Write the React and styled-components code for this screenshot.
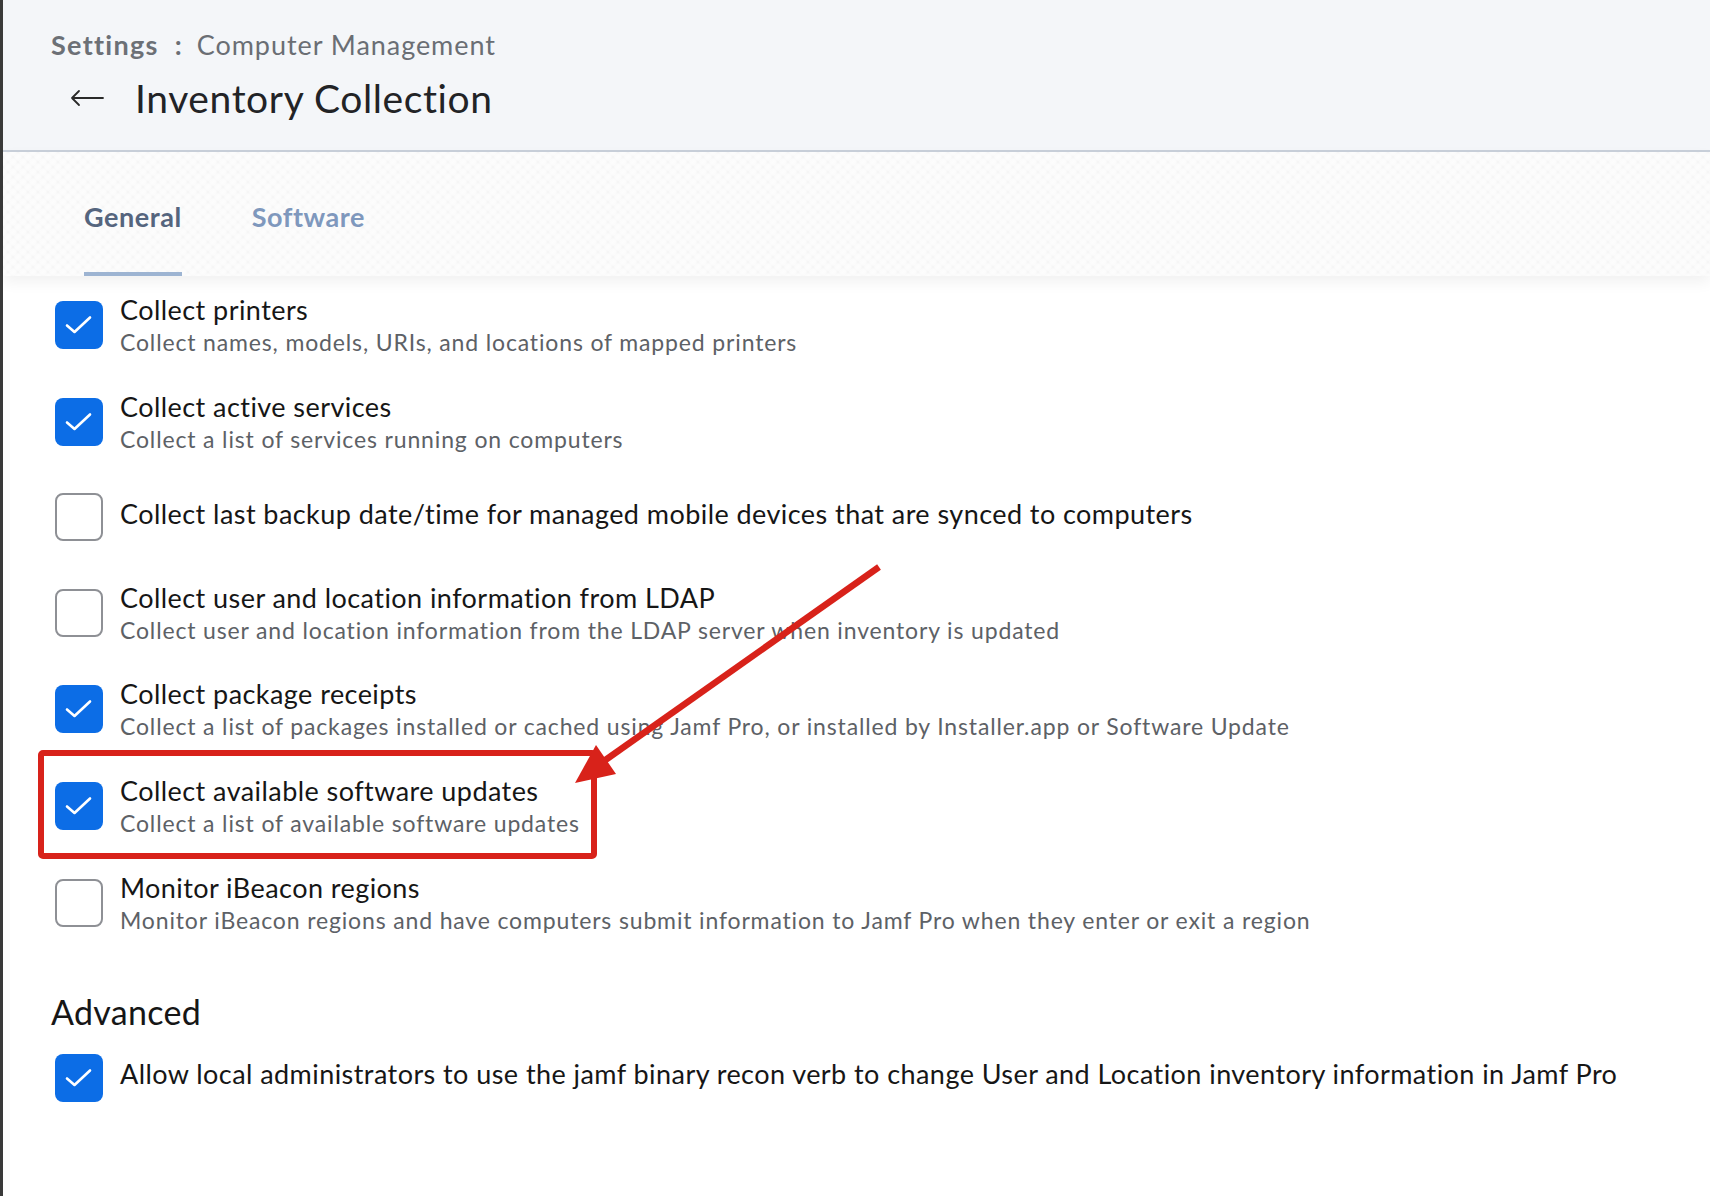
import React from "react";
import styled, { createGlobalStyle } from "styled-components";

const GlobalStyle = createGlobalStyle`
  html, body {
    margin: 0;
    padding: 0;
    background: #ffffff;
  }
  body {
    font-family: Lato, "Open Sans", "Liberation Sans", sans-serif;
    color: #161616;
  }
`;

const options = [
  {
    id: "printers",
    checked: true,
    title: "Collect printers",
    desc: "Collect names, models, URIs, and locations of mapped printers",
  },
  {
    id: "services",
    checked: true,
    title: "Collect active services",
    desc: "Collect a list of services running on computers",
  },
  {
    id: "backup",
    checked: false,
    title: "Collect last backup date/time for managed mobile devices that are synced to computers",
  },
  {
    id: "ldap",
    checked: false,
    title: "Collect user and location information from LDAP",
    desc: "Collect user and location information from the LDAP server when inventory is updated",
  },
  {
    id: "receipts",
    checked: true,
    title: "Collect package receipts",
    desc: "Collect a list of packages installed or cached using Jamf Pro, or installed by Installer.app or Software Update",
  },
  {
    id: "updates",
    checked: true,
    title: "Collect available software updates",
    desc: "Collect a list of available software updates",
  },
  {
    id: "ibeacon",
    checked: false,
    title: "Monitor iBeacon regions",
    desc: "Monitor iBeacon regions and have computers submit information to Jamf Pro when they enter or exit a region",
  },
];

/** Чекбокс в стиле Jamf */
function Checkbox({ checked }) {
  return (
    <Box $checked={checked}>
      {checked && (
        <svg width="48" height="48" viewBox="0 0 48 48">
          <path
            d="M12 24.5 L19.5 31 L35 16.5"
            fill="none"
            stroke="#ffffff"
            strokeWidth="2.6"
            strokeLinecap="round"
            strokeLinejoin="round"
          />
        </svg>
      )}
    </Box>
  );
}

function OptionRow({ option }) {
  const twoLines = Boolean(option.desc);
  return (
    <Row>
      <Checkbox checked={option.checked} />
      <RowText $twoLines={twoLines}>
        <RowTitle>{option.title}</RowTitle>
        {twoLines && <RowDesc>{option.desc}</RowDesc>}
      </RowText>
    </Row>
  );
}

export default function App() {
  return (
    <>
      <GlobalStyle />
      <Root>
        <Page>
          <Header>
            <Breadcrumb>
              <Crumb>Settings</Crumb>
              <Sep>:</Sep>
              <CrumbCurrent>Computer Management</CrumbCurrent>
            </Breadcrumb>
            <TitleRow>
              <BackArrow width="34" height="18" viewBox="0 0 34 18">
                <path
                  d="M33 9 H2 M9 2 L2 9 L9 16"
                  fill="none"
                  stroke="#2a2a2a"
                  strokeWidth="1.8"
                  strokeLinecap="round"
                  strokeLinejoin="round"
                />
              </BackArrow>
              <Title>Inventory Collection</Title>
            </TitleRow>
          </Header>

          <TabBar>
            <Tab $active>General</Tab>
            <Tab>Software</Tab>
          </TabBar>

          <Content>
            <OptionList>
              {options.map((o) => (
                <OptionRow key={o.id} option={o} />
              ))}
            </OptionList>
            <SectionHeading>Advanced</SectionHeading>
            <OptionRow
              option={{
                checked: true,
                title:
                  "Allow local administrators to use the jamf binary recon verb to change User and Location inventory information in Jamf Pro",
              }}
            />
          </Content>
        </Page>

        <Overlay width="1710" height="1196" viewBox="0 0 1710 1196">
          <rect x="41" y="753" width="553" height="103" fill="none" stroke="#d8221a" strokeWidth="6" rx="2" />
          <line x1="879" y1="567" x2="604" y2="761" stroke="#d8221a" strokeWidth="6.5" />
          <polygon points="575,783 596,745 616,774" fill="#d8221a" />
        </Overlay>
      </Root>
    </>
  );
}

const Root = styled.div`
  position: relative;
  width: 1710px;
  min-height: 1196px;
  overflow: hidden;
`;

const Page = styled.div`
  min-height: 1196px;
  border-left: 3px solid #3a3a3a;
  background: #ffffff;
`;

const Header = styled.header`
  background: #f4f6f9;
  border-bottom: 2px solid #c9d0da;
  padding: 26px 48px 26px;
`;

const Breadcrumb = styled.div`
  display: flex;
  align-items: center;
  height: 36px;
  font-size: 27px;
  color: #6a6e74;
`;

const Crumb = styled.span`
  font-weight: 700;
  color: #6c7076;
  letter-spacing: 1.3px;
`;

const Sep = styled.span`
  margin: 0 15px 0 16px;
  font-weight: 700;
`;

const CrumbCurrent = styled.span`
  letter-spacing: 0.95px;
`;

const TitleRow = styled.div`
  display: flex;
  align-items: center;
  height: 52px;
  margin-top: 10px;
`;

const BackArrow = styled.svg`
  margin-left: 19px;
  margin-right: 31px;
  flex-shrink: 0;
`;

const Title = styled.h1`
  margin: 0;
  font-size: 39px;
  font-weight: 400;
  color: #222326;
  letter-spacing: 0.6px;
`;

const TabBar = styled.nav`
  position: relative;
  z-index: 1;
  display: flex;
  align-items: flex-end;
  gap: 70px;
  height: 124px;
  padding-left: 81px;
  background-color: #f6f6f6;
  background-image:
    radial-gradient(circle at 50% 50%, #fdfdfd 0, #fbfbfb 3px, rgba(255, 255, 255, 0) 4.5px),
    radial-gradient(circle at 50% 50%, #fdfdfd 0, #fbfbfb 3px, rgba(255, 255, 255, 0) 4.5px);
  background-size: 10px 10px, 10px 10px;
  background-position: 0 0, 5px 5px;
  box-shadow: 0 6px 14px rgba(0, 0, 0, 0.06);
`;

const Tab = styled.div`
  font-size: 27px;
  line-height: 30px;
  font-weight: 700;
  letter-spacing: 0.55px;
  color: ${(p) => (p.$active ? "#55657e" : "#7f98bd")};
  padding-bottom: 40px;
  border-bottom: 4px solid ${(p) => (p.$active ? "#9db4d2" : "transparent")};
`;

const Content = styled.main`
  padding: 15px 52px 40px;
`;

const OptionList = styled.div`
  display: flex;
  flex-direction: column;
  gap: 28.6px;
`;

const Row = styled.div`
  display: flex;
  align-items: center;
  gap: 17px;
  min-height: 66px;
`;

const Box = styled.div`
  flex-shrink: 0;
  box-sizing: border-box;
  width: 48px;
  height: 48px;
  border-radius: 8px;
  background: ${(p) => (p.$checked ? "#0c6de6" : "#ffffff")};
  border: ${(p) => (p.$checked ? "none" : "2px solid #8e9095")};
  display: flex;
  align-items: center;
  justify-content: center;

  svg {
    display: block;
  }
`;

const RowText = styled.div`
  display: flex;
  flex-direction: column;
  padding: ${(p) => (p.$twoLines ? "2px 0 0" : "0 0 8px")};
`;

const RowTitle = styled.div`
  font-size: 27px;
  line-height: 33px;
  color: #161616;
  letter-spacing: 0.44px;
`;

const RowDesc = styled.div`
  font-size: 23px;
  line-height: 33px;
  color: #5d6166;
  letter-spacing: 0.85px;
`;

const SectionHeading = styled.h2`
  margin: 55px 0 13px -4px;
  font-size: 34px;
  line-height: 40px;
  font-weight: 400;
  color: #161616;
  letter-spacing: 0.3px;
`;

const Overlay = styled.svg`
  position: absolute;
  top: 0;
  left: 0;
  pointer-events: none;
`;
